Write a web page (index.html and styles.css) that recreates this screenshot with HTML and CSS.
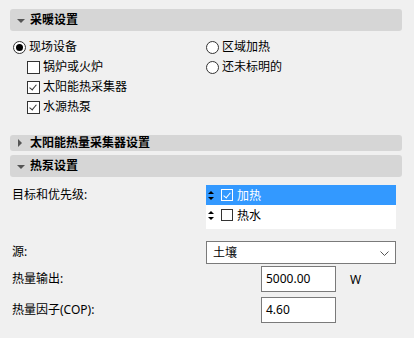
FILE: index.html
```html
<!doctype html>
<html lang="zh">
<head>
    <meta charset="UTF-8">
    <title>热泵设置</title>
    <link rel="stylesheet" href="styles.css">
</head>
<body>
    <div class="panel">
        <div class="section-head open">采暖设置</div>
        <div class="options">
            <div class="options__col">
                <div class="opt opt--radio checked"><span class="radio"></span>现场设备</div>
                <div class="opt opt--sub"><span class="check"></span>锅炉或火炉</div>
                <div class="opt opt--sub"><span class="check checked"></span>太阳能热采集器</div>
                <div class="opt opt--sub"><span class="check checked"></span>水源热泵</div>
            </div>
            <div class="options__col options__col-right">
                <div class="opt opt--radio"><span class="radio"></span>区域加热</div>
                <div class="opt opt--radio"><span class="radio"></span>还未标明的</div>
            </div>
        </div>

        <div class="section-head section-head--short">太阳能热量采集器设置</div>
        <div class="section-head open">热泵设置</div>

        <div class="form">
            <div class="form-row form-row--list">
                <div class="form-row__label">目标和优先级:</div>
                <div class="listbox">
                    <div class="listbox__item selected"><span class="sorter"></span><span class="check checked"></span>加热</div>
                    <div class="listbox__item"><span class="sorter"></span><span class="check"></span>热水</div>
                </div>
            </div>
            <div class="form-row form-row--select">
                <div class="form-row__label">源:</div>
                <div class="select">土壤
                    <svg class="select__arrow" width="9" height="5" viewBox="0 0 9 5"><path d="M0.5 0.5 L4.5 4.5 L8.5 0.5" fill="none" stroke="#555" stroke-width="1"/></svg>
                </div>
            </div>
            <div class="form-row form-row--input">
                <div class="form-row__label form-row__label-wide">热量输出:</div>
                <div class="field">5000.00</div>
                <div class="unit">W</div>
            </div>
            <div class="form-row form-row--input">
                <div class="form-row__label form-row__label-wide">热量因子(COP):</div>
                <div class="field">4.60</div>
            </div>
        </div>
    </div>
</body>
</html>
```

FILE: styles.css
```css
*,*:before,*:after{
    box-sizing: border-box;
}
body{
    margin: 0;
    padding: 0;
    background: #f0f0f0;
    font-family: "Noto Sans", "Noto Sans CJK SC", sans-serif;
    font-size: 12px;
    color: #000;
}
.panel{
    padding: 9px 12px 0 10px;
    width: 414px;
}
.section-head{
    position: relative;
    height: 22px;
    line-height: 22px;
    padding-left: 20px;
    background: #d6d6d6;
    border-radius: 3px;
    font-weight: bold;
    font-size: 12px;
}
.section-head:before{
    content: "";
    position: absolute;
    left: 8px;
    top: 7px;
    border-top: 4px solid transparent;
    border-bottom: 4px solid transparent;
    border-left: 4px solid #555;
}
.section-head.open:before{
    left: 7px;
    top: 10px;
    border-left: 4px solid transparent;
    border-right: 4px solid transparent;
    border-top: 4px solid #555;
    border-bottom: 0;
}
.section-head--short{
    height: 16px;
    line-height: 16px;
    margin-top: 18px;
}
.section-head--short:before{
    top: 4px;
}
.section-head + .section-head{
    margin-top: 4px;
}
.options{
    display: flex;
    padding: 6px 0 0 3px;
}
.options__col{
    width: 193px;
}
.options__col-right{
    width: auto;
}
.opt{
    display: flex;
    align-items: center;
    height: 20px;
    line-height: 20px;
}
.opt--sub{
    padding-left: 14px;
}
.radio{
    width: 13px;
    height: 13px;
    border: 1px solid #333;
    border-radius: 50%;
    background: #fff;
    margin-right: 3px;
    position: relative;
}
.checked > .radio:after{
    content: "";
    position: absolute;
    left: 2px;
    top: 2px;
    width: 7px;
    height: 7px;
    border-radius: 50%;
    background: #000;
}
.check{
    width: 13px;
    height: 13px;
    border: 1px solid #333;
    background: #fff;
    margin-right: 3px;
    position: relative;
}
.check.checked:after{
    content: "";
    position: absolute;
    left: 3px;
    top: 1px;
    width: 4px;
    height: 7px;
    border-right: 1px solid #333;
    border-bottom: 1px solid #333;
    transform: rotate(40deg);
}
.form{
    padding: 8px 0 0 2px;
}
.form-row{
    display: flex;
    align-items: flex-start;
}
.form-row__label{
    width: 194px;
    line-height: 20px;
}
.form-row__label-wide{
    width: 249px;
}
.form-row--list{
    height: 53px;
}
.listbox{
    width: 190px;
    height: 44px;
    background: #fff;
}
.listbox__item{
    display: flex;
    align-items: center;
    height: 20px;
    padding-left: 2px;
}
.listbox__item.selected{
    background: #3399ff;
    color: #fff;
}
.listbox__item .check{
    width: 12px;
    height: 12px;
    margin-right: 4px;
}
.listbox__item.selected .check{
    background: transparent;
    border-color: #fff;
}
.listbox__item.selected .check.checked:after{
    border-color: #fff;
}
.sorter{
    position: relative;
    width: 5px;
    height: 9px;
    margin-right: 8px;
}
.sorter:before,
.sorter:after{
    content: "";
    position: absolute;
    left: 0;
    border-left: 3px solid transparent;
    border-right: 3px solid transparent;
}
.sorter:before{
    top: 0;
    border-bottom: 3px solid #000;
}
.sorter:after{
    bottom: 0;
    border-top: 3px solid #000;
}
.form-row--select{
    align-items: center;
    height: 28px;
}
.select{
    position: relative;
    width: 190px;
    height: 23px;
    line-height: 21px;
    border: 1px solid #7a7a7a;
    background: #fff;
    padding-left: 6px;
}
.select__arrow{
    position: absolute;
    right: 6px;
    top: 9px;
}
.form-row--input{
    align-items: center;
    height: 26px;
    margin-top: 0;
}
.form-row--input + .form-row--input{
    margin-top: 5px;
}
.field{
    width: 75px;
    height: 26px;
    line-height: 24px;
    border: 1px solid #7a7a7a;
    background: #fff;
    padding-left: 4px;
}
.unit{
    margin-left: 14px;
}
```
